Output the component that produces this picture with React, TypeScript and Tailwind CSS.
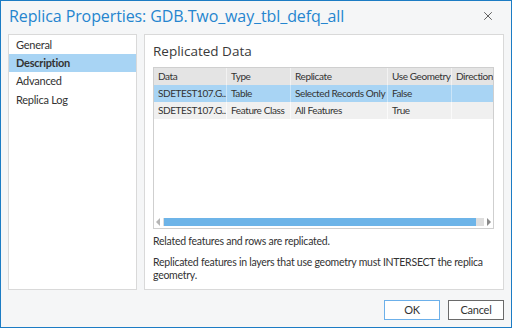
import { X } from "lucide-react";

const titleFont = { fontFamily: '"Open Sans", "Noto Sans", sans-serif' };
const bodyFont = { fontFamily: 'Lato, "Open Sans", sans-serif' };

const columns = [
  { name: "Data", w: "w-[73px]" },
  { name: "Type", w: "w-[64px]" },
  { name: "Replicate", w: "w-[97px]" },
  { name: "Use Geometry", w: "w-[64px]" },
  { name: "Direction", w: "w-[60px]" },
];

const rows = [
  ["SDETEST107.G...", "Table", "Selected Records Only", "False", ""],
  ["SDETEST107.G...", "Feature Class", "All Features", "True", ""],
];

export default function App() {
  return (
    <div
      className="w-[512px] h-[328px] border border-[#1c7cc4] bg-[#f5f6f7] flex flex-col text-[#333] overflow-hidden tracking-[-0.25px]"
      style={bodyFont}
    >
      <div className="h-[33px] flex items-center justify-between pl-[8px] pr-[16px] pb-[4px]">
        <span className="text-[16px] text-[#2585cf] tracking-[-0.1px]" style={titleFont}>
          Replica Properties: GDB.Two_way_tbl_defq_all
        </span>
        <X size={14} strokeWidth={1.6} className="text-[#555]" />
      </div>

      <div className="flex gap-[7px] px-[7px] h-[256px]">
        <div className="w-[129px] bg-white border border-[#d9d9d9] pt-[1px] text-[11px]">
          <div className="h-[18px] flex items-center pl-[7px]">General</div>
          <div className="h-[18px] flex items-center pl-[7px] bg-[#a8d4f4] font-bold">
            Description
          </div>
          <div className="h-[19px] flex items-center pl-[7px]">Advanced</div>
          <div className="h-[18px] flex items-center pl-[7px]">Replica Log</div>
        </div>

        <div className="flex-1 bg-white border border-[#d9d9d9] px-[8px] text-[10.5px]">
          <div
            className="h-[32px] flex items-center text-[13.5px] text-[#3a3a3a] tracking-normal"
            style={titleFont}
          >
            Replicated Data
          </div>
          <div className="w-[341px] h-[162px] border border-[#cfcfcf] flex flex-col overflow-hidden text-[10px] tracking-[-0.4px]">
            <div className="flex h-[17px] bg-[#e4e4e4]">
              {columns.map((c) => (
                <div
                  key={c.name}
                  className={`${c.w} shrink-0 border-r border-[#f2f2f2] pl-[4px] flex items-center whitespace-nowrap overflow-hidden`}
                >
                  {c.name}
                </div>
              ))}
            </div>
            {rows.map((r, i) => (
              <div
                key={i}
                className={`flex h-[17px] ${i === 0 ? "bg-[#a8d4f4]" : "bg-[#f0f0f0]"}`}
              >
                {r.map((cell, j) => (
                  <div
                    key={j}
                    className={`${columns[j].w} shrink-0 border-r ${i === 0 ? "border-[#cbe5f8]" : "border-[#fafafa]"} pl-[4px] flex items-center whitespace-nowrap overflow-hidden`}
                  >
                    {cell}
                  </div>
                ))}
              </div>
            ))}
            <div className="flex-1" />
            <div className="h-[11px] mb-[1px] flex items-center px-[1px] gap-[2px]">
              <svg width="6" height="8" viewBox="0 0 6 8">
                <path d="M5 0 L1 4 L5 8 Z" fill="#b5b5b5" />
              </svg>
              <div className="flex-1 h-[8px] bg-[#dedede] flex">
                <div className="w-[312px] h-full bg-[#6db4e8] ml-[1px]" />
              </div>
              <svg width="6" height="8" viewBox="0 0 6 8">
                <path d="M1 0 L5 4 L1 8 Z" fill="#8a8a8a" />
              </svg>
            </div>
          </div>
          <div className="mt-[6px] leading-[13px]">Related features and rows are replicated.</div>
          <div className="mt-[8px] leading-[13px]">
            Replicated features in layers that use geometry must INTERSECT the replica
            geometry.
          </div>
        </div>
      </div>

      <div className="flex justify-end gap-[8px] pr-[7px] pt-[10px] text-[11px]">
        <button className="w-[56px] h-[20px] bg-white border border-[#6cb0ea] flex items-center justify-center">
          OK
        </button>
        <button className="w-[56px] h-[20px] bg-white border border-[#6a6a6a] flex items-center justify-center">
          Cancel
        </button>
      </div>
    </div>
  );
}
